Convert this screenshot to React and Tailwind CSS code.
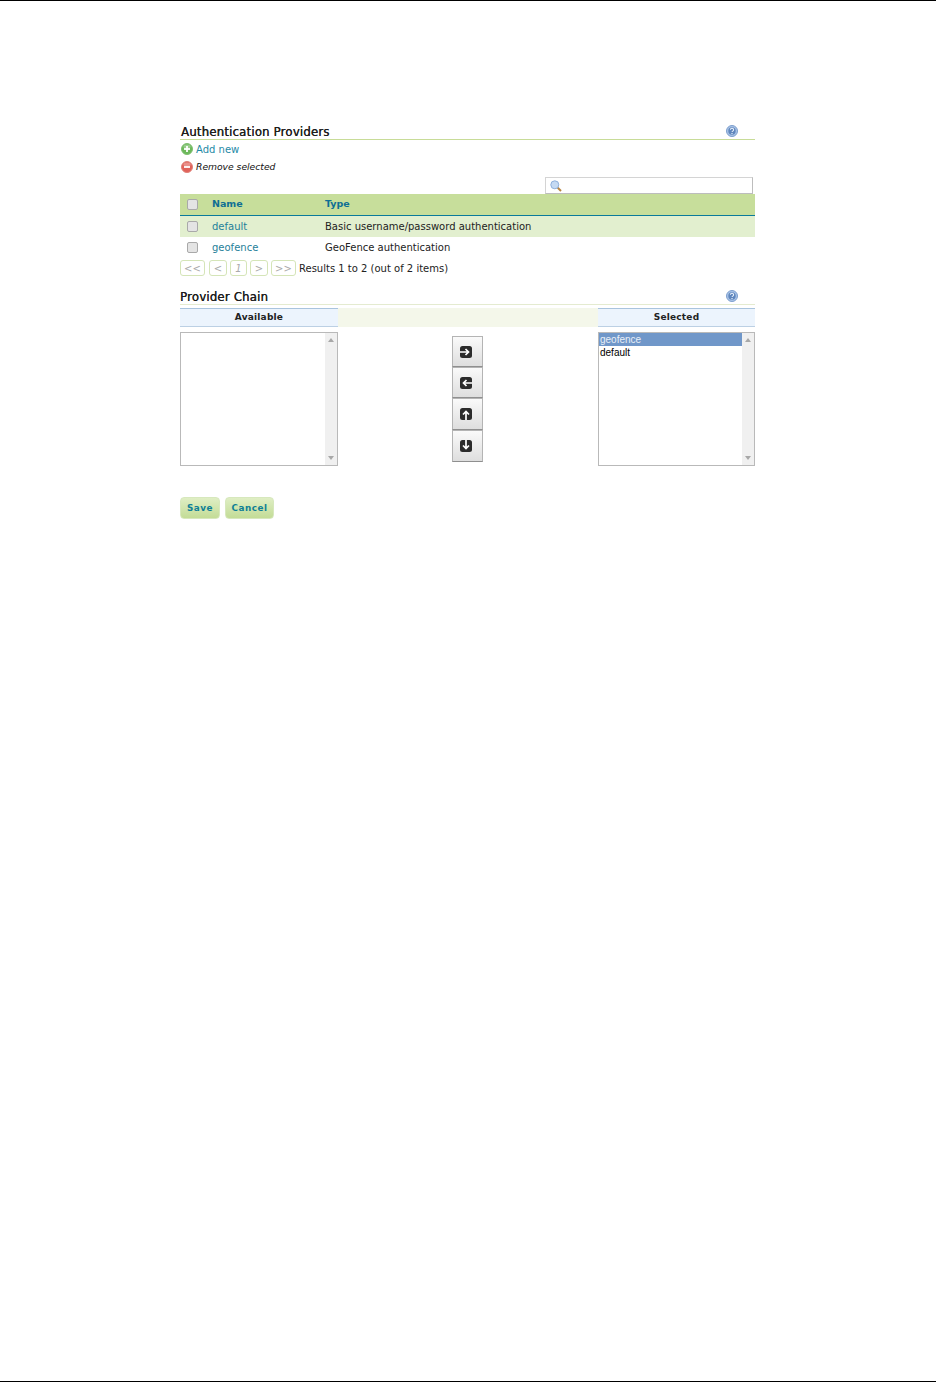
import React from 'react';

const RoundIcon = ({ color, dark, minus }) => (
  <svg width="12" height="12" viewBox="0 0 12 12" className="shrink-0">
    <circle cx="6" cy="6" r="5.5" fill={color} stroke={dark} strokeWidth="1" />
    <ellipse cx="6" cy="3.4" rx="3.6" ry="2" fill="#ffffff" opacity="0.3" />
    <rect x="3" y="5" width="6" height="2" fill="#ffffff" opacity="0.9" />
    {!minus && <rect x="5" y="3" width="2" height="6" fill="#ffffff" opacity="0.9" />}
  </svg>
);

const HelpIcon = () => (
  <svg width="12" height="12" viewBox="0 0 12 12" className="mb-[2px]">
    <circle cx="6" cy="6" r="5.5" fill="#a9c3e6" stroke="#7d9fce" />
    <circle cx="6" cy="6" r="3.7" fill="#5f86bd" />
    <path d="M4.4 4.8a1.6 1.5 0 1 1 2.4 1.3c-.5.3-.8.5-.8 1" fill="none" stroke="#e8f0fa" strokeWidth="1.1" />
    <rect x="5.4" y="8" width="1.2" height="1.1" fill="#e8f0fa" />
  </svg>
);

const SearchIcon = () => (
  <svg width="12" height="12" viewBox="0 0 12 12">
    <path d="M7 7l4 4" stroke="#b8843f" strokeWidth="2" />
    <circle cx="4.8" cy="4.8" r="4" fill="#c5daf3" stroke="#8fb0dc" />
  </svg>
);

const Check = () => (
  <span className="block w-[9px] h-[9px] box-content rounded-[2px] border border-[#a9a9a9] bg-[#e4e4e4]" />
);

const Page = ({ w, children, italic }) => (
  <span className={`flex items-center justify-center h-[16px] rounded-[3px] border border-[#d5e5b8] text-[#aaaaaa] text-[10px] ${w} ${italic ? 'italic' : ''}`}>
    {children}
  </span>
);

const Title = ({ children, line }) => (
  <div className={`flex items-end justify-between h-[19px] border-b ${line} pr-[17px]`}>
    <h3 className="text-[11.7px] leading-[14px] text-[#1d1d1d] tracking-[0.2px] [text-shadow:0.3px_0_0_#1d1d1d]">{children}</h3>
    <HelpIcon />
  </div>
);

// the four shuttle arrows, white cutting through a dark rounded square
const arrows = [
  'M0 6h8M5.5 3L8.5 6 5.5 9',
  'M12 6H4M6.5 3L3.5 6 6.5 9',
  'M6 12V4M3 6.5L6 3.5 9 6.5',
  'M6 0v8M3 5.5L6 8.5 9 5.5',
];

const MoveButton = ({ d, h }) => (
  <button className={`flex items-center justify-center w-[31px] ${h} pr-[3px] border border-[#b4b4b4] border-b-[#8f8f8f] bg-gradient-to-b from-[#fafafa] to-[#dedede]`}>
    <svg width="12" height="12" viewBox="0 0 12 12">
      <rect width="12" height="12" rx="2.5" fill="#2b2b2b" />
      <path d={d} fill="none" stroke="#ffffff" strokeWidth="1.7" />
    </svg>
  </button>
);

const ListBox = ({ items }) => (
  <div className="flex h-[134px] border border-[#b9b9b9] bg-white">
    <ul className="flex-1 text-[10px] leading-[13px] font-['Liberation_Sans',sans-serif] text-black">
      {items.map((item, i) => (
        <li key={item} className={`h-[13px] pl-[1px] ${i === 0 ? 'bg-[#7097c9] text-[#e9eff7]' : ''}`}>{item}</li>
      ))}
    </ul>
    <div className="flex flex-col justify-between items-center w-[12px] py-[5px] bg-[#f0f0f0]">
      <span className="w-0 h-0 border-x-[3.5px] border-x-transparent border-b-[4px] border-b-[#a8a8a8]" />
      <span className="w-0 h-0 border-x-[3.5px] border-x-transparent border-t-[4px] border-t-[#a8a8a8]" />
    </div>
  </div>
);

const ChainHead = ({ children }) => (
  <div className="flex items-center justify-center h-[19px] border-y border-t-[#a9c4de] border-b-[#bcd0e4] bg-[#ecf4fd] text-[9px] font-bold text-[#222222] tracking-[0.2px]">
    {children}
  </div>
);

const GreenButton = ({ children, w }) => (
  <button className={`h-[22px] ${w} pt-[1px] rounded-[4px] border border-[#d7e8bd] bg-gradient-to-b from-[#dfeec4] to-[#c3dc96] text-[8.8px] font-bold text-[#0f7f96] tracking-[0.5px]`}>
    {children}
  </button>
);

const App = () => {
  return (
    <div className="flex flex-col justify-between h-[1382px] bg-white border-t border-b border-black font-['DejaVu_Sans',sans-serif]">
      <div className="w-[575px] ml-[180px] pt-[120px] text-[10px] text-[#222222]">
        <Title line="border-[#c8dc98] pl-[1px]">Authentication Providers</Title>

        <div className="flex items-center gap-[3px] h-[18px] pl-[1px] text-[#1f8aa6]">
          <RoundIcon color="#6cb85a" dark="#7fbf70" />
          <a>Add new</a>
        </div>
        <div className="flex items-center gap-[3px] h-[18px] pl-[1px] italic text-[#111111]">
          <RoundIcon color="#e0625a" dark="#e08078" minus />
          <a className="text-[9.2px]">Remove selected</a>
        </div>

        <div className="flex justify-end pr-[2px] h-[17px] mt-[1px]">
          <div className="flex items-center w-[208px] pl-[4px] border border-[#d4d4d4] border-r-[#bdbdbd] border-b-[#bdbdbd]">
            <SearchIcon />
          </div>
        </div>

        <table className="w-full border-collapse">
          <thead>
            <tr className="h-[21px] bg-[#c7de9b] border-b border-[#0a7a9a] text-[#0f6f94] text-[9.5px] font-bold text-left">
              <th className="w-[32px] pl-[7px]"><Check /></th>
              <th className="w-[113px]">Name</th>
              <th>Type</th>
            </tr>
          </thead>
          <tbody>
            <tr className="h-[22px] bg-[#e2efcf]">
              <td className="pl-[7px]"><Check /></td>
              <td className="text-[#1f7f9a]">default</td>
              <td>Basic username/password authentication</td>
            </tr>
            <tr className="h-[21px]">
              <td className="pl-[7px]"><Check /></td>
              <td className="text-[#1f7f9a]">geofence</td>
              <td>GeoFence authentication</td>
            </tr>
          </tbody>
        </table>

        <div className="flex items-center gap-[3px] h-[16px] mt-[2px]">
          <Page w="w-[25px]">&lt;&lt;</Page>
          <Page w="w-[18px] ml-[1px]">&lt;</Page>
          <Page w="w-[17px]" italic>1</Page>
          <Page w="w-[18px]">&gt;</Page>
          <Page w="w-[25px]">&gt;&gt;</Page>
          <span className="text-[#222222]">Results 1 to 2 (out of 2 items)</span>
        </div>

        <div className="mt-[10px]">
          <Title line="border-[#e4ebd0]">Provider Chain</Title>
        </div>

        <div className="grid grid-cols-[158px_1fr_157px] mt-[3px]">
          <ChainHead>Available</ChainHead>
          <div className="h-[19px] bg-[#f4f7ea]" />
          <ChainHead>Selected</ChainHead>

          <div className="mt-[5px]"><ListBox items={[]} /></div>
          <div className="flex flex-col items-center pt-[9px] pr-[1px]">
            <MoveButton d={arrows[0]} h="h-[31px]" />
            <MoveButton d={arrows[1]} h="h-[31px]" />
            <MoveButton d={arrows[2]} h="h-[32px]" />
            <MoveButton d={arrows[3]} h="h-[32px]" />
          </div>
          <div className="mt-[5px]"><ListBox items={['geofence', 'default']} /></div>
        </div>

        <div className="flex gap-[5px] mt-[31px]">
          <GreenButton w="w-[40px]">Save</GreenButton>
          <GreenButton w="w-[49px]">Cancel</GreenButton>
        </div>
      </div>
    </div>
  );
};

export default App;
